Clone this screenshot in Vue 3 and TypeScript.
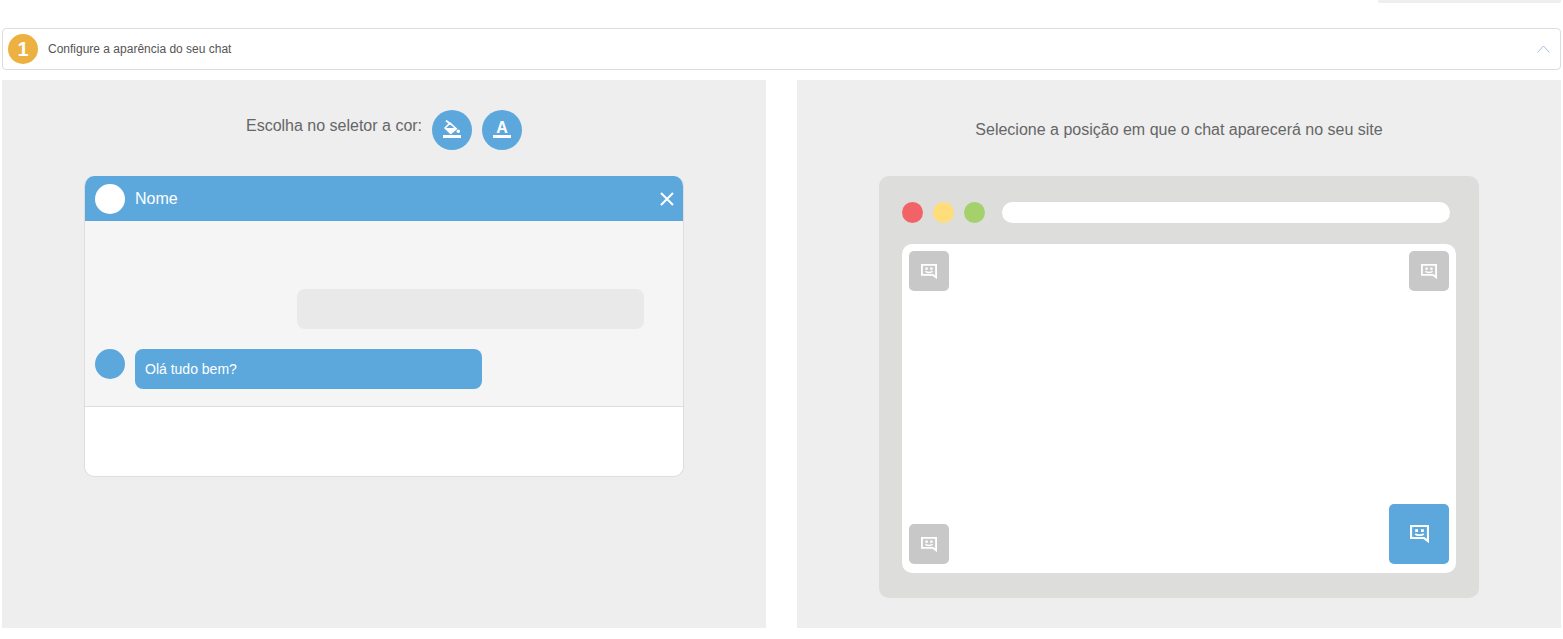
<script setup lang="ts">
interface SpotButton {
  key: string
  active: boolean
}

const topSpots: SpotButton[] = [
  { key: 'top-left', active: false },
  { key: 'top-right', active: false },
]

const bottomSpots: SpotButton[] = [
  { key: 'bottom-left', active: false },
  { key: 'bottom-right', active: true },
]

const dots = ['#f26367', '#fedd7a', '#a4d16c']
</script>

<template>
  <div class="page">
    <div class="top-tab"></div>

    <div class="step-bar">
      <span class="step-number">1</span>
      <span class="step-title">Configure a aparência do seu chat</span>
      <svg class="chevron" viewBox="0 0 13 8" width="13" height="8">
        <polyline points="0.5,7.5 6.5,1 12.5,7.5" fill="none" stroke="#a9bbe4" stroke-width="1" />
      </svg>
    </div>

    <div class="panels">
      <section class="panel">
        <div class="picker-row">
          <span class="picker-label">Escolha no seletor a cor:</span>
          <button class="round-btn" type="button">
            <svg viewBox="0 0 20 20" width="20" height="20">
              <path d="M4 0.500 9 4.500" stroke="#fff" stroke-width="1.800" fill="none" />
              <path d="M8 3.200 14.300 8.800 8.700 13.400 3 8z" stroke="#fff" stroke-width="1.600" fill="none" stroke-linejoin="round" />
              <path d="M3 8h11.300L8.700 13.400z" fill="#fff" />
              <circle cx="16.300" cy="11.300" r="1.700" fill="#fff" />
              <rect x="1" y="15" width="18" height="3" fill="#fff" />
            </svg>
          </button>
          <button class="round-btn" type="button">
            <span class="text-icon">A</span>
          </button>
        </div>

        <div class="chat-window">
          <header class="chat-header">
            <span class="avatar avatar-white"></span>
            <span class="chat-name">Nome</span>
            <svg class="close-icon" viewBox="0 0 14 14" width="14" height="14">
              <path d="M1 1l12 12M13 1L1 13" stroke="#fff" stroke-width="2" fill="none" />
            </svg>
          </header>
          <div class="chat-body">
            <div class="bubble bubble-grey"></div>
            <div class="incoming">
              <span class="avatar avatar-blue"></span>
              <div class="bubble bubble-blue">Olá tudo bem?</div>
            </div>
          </div>
          <div class="chat-footer"></div>
        </div>
      </section>

      <section class="panel">
        <div class="picker-row">
          <span class="position-label">Selecione a posição em que o chat aparecerá no seu site</span>
        </div>

        <div class="browser">
          <div class="browser-bar">
            <span v-for="color in dots" :key="color" class="dot" :style="{ background: color }"></span>
            <span class="url-bar"></span>
          </div>
          <div class="viewport">
            <div class="spot-row">
              <button
                v-for="spot in topSpots"
                :key="spot.key"
                class="spot"
                type="button"
              >
                <svg viewBox="0 0 19 18" width="16" height="15">
                  <path d="M1 1h17v15l-4-3H1z" fill="none" stroke="#fff" stroke-width="2.200" />
                  <rect x="5.200" y="4.200" width="2.800" height="2.800" fill="#fff" />
                  <rect x="11" y="4.200" width="2.800" height="2.800" fill="#fff" />
                  <path d="M5.200 8.800c1.500 1.800 7 1.800 8.600 0" fill="none" stroke="#fff" stroke-width="1.800" />
                </svg>
              </button>
            </div>
            <div class="spot-row spot-row-bottom">
              <button
                v-for="spot in bottomSpots"
                :key="spot.key"
                class="spot"
                :class="{ 'spot-active': spot.active }"
                type="button"
              >
                <svg
                  viewBox="0 0 19 18"
                  :width="spot.active ? 19 : 16"
                  :height="spot.active ? 18 : 15"
                >
                  <path d="M1 1h17v15l-4-3H1z" fill="none" stroke="#fff" stroke-width="2.200" />
                  <rect x="5.200" y="4.200" width="2.800" height="2.800" fill="#fff" />
                  <rect x="11" y="4.200" width="2.800" height="2.800" fill="#fff" />
                  <path d="M5.200 8.800c1.500 1.800 7 1.800 8.600 0" fill="none" stroke="#fff" stroke-width="1.800" />
                </svg>
              </button>
            </div>
          </div>
        </div>
      </section>
    </div>
  </div>
</template>

<style scoped>
.page {
  height: 639px;
  box-sizing: border-box;
  padding: 0 2px;
  background: #fff;
  font-family: "Liberation Sans", Arial, sans-serif;
  overflow: hidden;
}

.top-tab {
  width: 183px;
  height: 3px;
  margin-left: auto;
  background: #eee;
  border-radius: 0 0 2px 2px;
}

.step-bar {
  display: flex;
  align-items: center;
  height: 42px;
  box-sizing: border-box;
  margin-top: 25px;
  padding: 0 10px 0 5px;
  background: #fff;
  border: 1px solid #ddd;
  border-radius: 4px;
}

.step-number {
  display: flex;
  align-items: center;
  justify-content: center;
  width: 30px;
  height: 30px;
  border-radius: 50%;
  background: #ecb140;
  color: #fff;
  font-size: 20px;
  font-weight: 700;
}

.step-title {
  margin-left: 10px;
  font-size: 12px;
  color: #555;
}

.chevron {
  margin-left: auto;
}

.panels {
  display: grid;
  grid-template-columns: 764px 764px;
  gap: 31px;
  margin-top: 10px;
}

.panel {
  display: flex;
  flex-direction: column;
  align-items: center;
  height: 548px;
  padding-top: 30px;
  box-sizing: border-box;
  background: #eee;
}

.picker-row {
  display: flex;
  align-items: center;
  justify-content: center;
  gap: 10px;
  height: 40px;
}

.picker-label {
  padding-bottom: 8px;
  font-size: 16px;
  color: #666;
}

.position-label {
  font-size: 16px;
  color: #666;
}

.round-btn {
  display: flex;
  align-items: center;
  justify-content: center;
  width: 40px;
  height: 40px;
  padding: 0;
  border: none;
  border-radius: 50%;
  background: #5ca8dd;
}

.text-icon {
  display: block;
  width: 18px;
  height: 17px;
  margin-bottom: 4px;
  border-bottom: 3px solid #fff;
  color: #fff;
  font-family: "Liberation Sans", Arial, sans-serif;
  font-size: 16px;
  font-weight: 700;
  line-height: 19px;
  text-align: center;
}

.chat-window {
  display: flex;
  flex-direction: column;
  width: 600px;
  height: 301px;
  box-sizing: border-box;
  margin-top: 26px;
  background: #fff;
  border: 1px solid #ddd;
  border-top: none;
  border-radius: 10px;
  overflow: hidden;
}

.chat-header {
  display: flex;
  align-items: center;
  flex: none;
  height: 45px;
  padding: 0 9px 0 10px;
  background: #5ca8dd;
  color: #fff;
}

.avatar {
  flex: none;
  width: 30px;
  height: 30px;
  border-radius: 50%;
}

.avatar-white {
  background: #fff;
}

.avatar-blue {
  background: #5ca8dd;
}

.chat-name {
  margin-left: 10px;
  font-size: 16px;
}

.close-icon {
  margin-left: auto;
}

.chat-body {
  display: flex;
  flex-direction: column;
  flex: none;
  height: 186px;
  box-sizing: border-box;
  padding: 68px 39px 0 10px;
  background: #f5f5f5;
  border-bottom: 1px solid #ddd;
}

.bubble {
  width: 347px;
  height: 40px;
  box-sizing: border-box;
  border-radius: 8px;
}

.bubble-grey {
  align-self: flex-end;
  background: #e9e9e9;
}

.incoming {
  display: flex;
  gap: 10px;
  margin-top: 20px;
}

.bubble-blue {
  padding: 0 10px;
  background: #5ca8dd;
  color: #fff;
  font-size: 14px;
  line-height: 40px;
}

.chat-footer {
  flex: 1;
}

.browser {
  width: 600px;
  height: 422px;
  box-sizing: border-box;
  margin-top: 26px;
  padding: 26px 23px 25px;
  background: #dddddb;
  border-radius: 10px;
}

.browser-bar {
  display: flex;
  gap: 10px;
  height: 21px;
}

.dot {
  width: 21px;
  height: 21px;
  border-radius: 50%;
}

.url-bar {
  width: 448px;
  margin-left: 7px;
  border-radius: 11px;
  background: #fff;
}

.viewport {
  display: flex;
  flex-direction: column;
  justify-content: space-between;
  height: 329px;
  box-sizing: border-box;
  margin-top: 21px;
  padding: 7px 7px 9px;
  background: #fff;
  border-radius: 10px;
}

.spot-row {
  display: flex;
  justify-content: space-between;
}

.spot-row-bottom {
  align-items: flex-end;
}

.spot {
  display: flex;
  align-items: center;
  justify-content: center;
  width: 40px;
  height: 40px;
  padding: 0;
  border: none;
  border-radius: 5px;
  background: #c8c8c8;
}

.spot-active {
  width: 60px;
  height: 60px;
  background: #5ca8dd;
}
</style>
